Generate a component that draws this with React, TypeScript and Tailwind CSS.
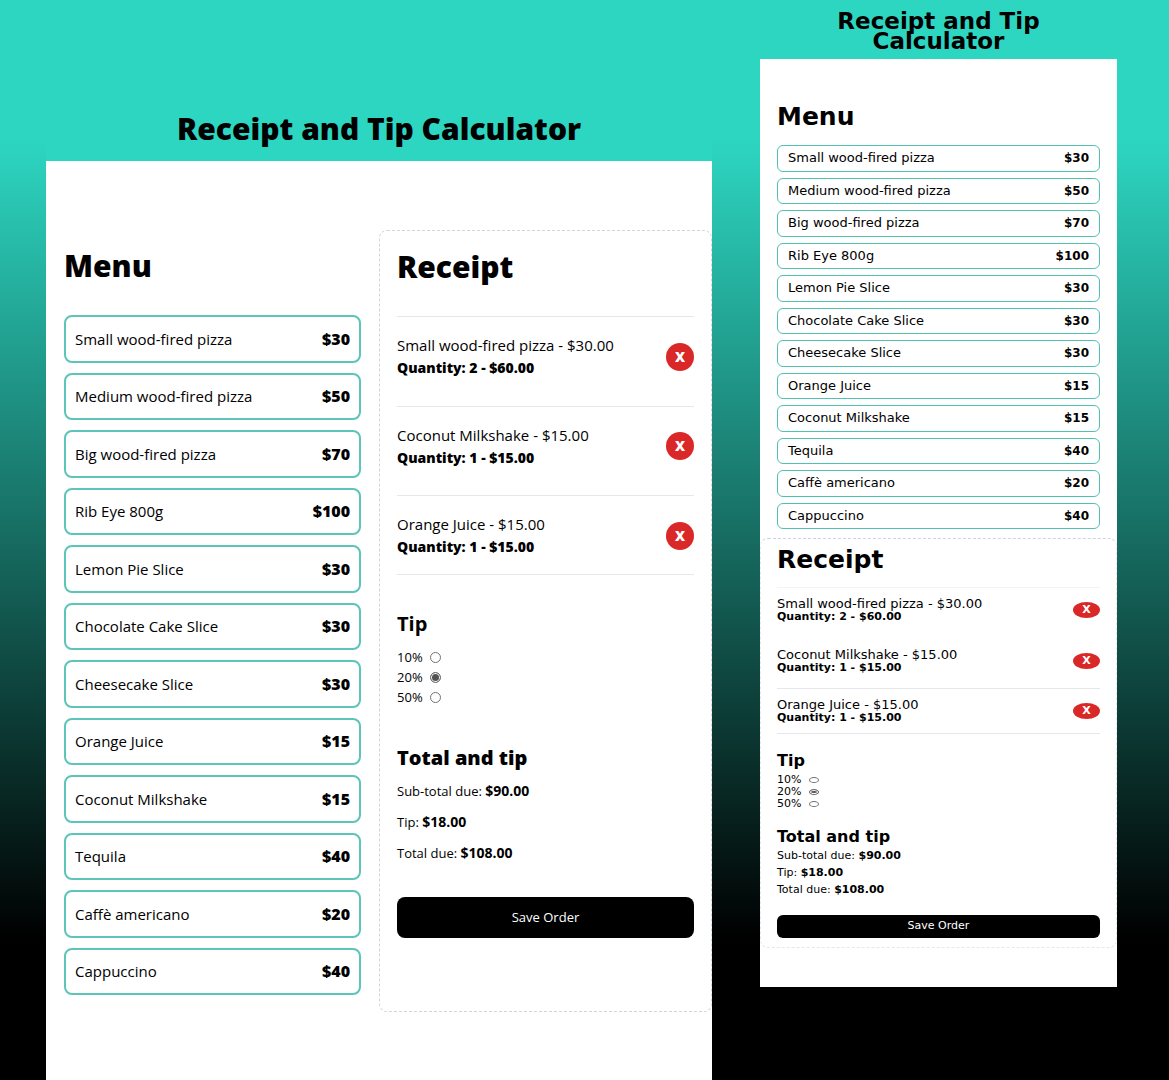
import { useState } from "react";

type Dish = { name: string; price: number };
type Line = { name: string; price: number; quantity: number };

const DISHES: Dish[] = [
  { name: "Small wood-fired pizza", price: 30 },
  { name: "Medium wood-fired pizza", price: 50 },
  { name: "Big wood-fired pizza", price: 70 },
  { name: "Rib Eye 800g", price: 100 },
  { name: "Lemon Pie Slice", price: 30 },
  { name: "Chocolate Cake Slice", price: 30 },
  { name: "Cheesecake Slice", price: 30 },
  { name: "Orange Juice", price: 15 },
  { name: "Coconut Milkshake", price: 15 },
  { name: "Tequila", price: 40 },
  { name: "Caffè americano", price: 20 },
  { name: "Cappuccino", price: 40 },
];

const ORDER: Line[] = [
  { name: "Small wood-fired pizza", price: 30, quantity: 2 },
  { name: "Coconut Milkshake", price: 15, quantity: 1 },
  { name: "Orange Juice", price: 15, quantity: 1 },
];

const TIPS = [10, 20, 50];

const money = (n: number) => `$${n.toFixed(2)}`;

function useOrder() {
  const [lines, setLines] = useState(ORDER);
  const [tip, setTip] = useState(20);
  const add = (dish: Dish) =>
    setLines((old) =>
      old.some((l) => l.name === dish.name)
        ? old.map((l) => (l.name === dish.name ? { ...l, quantity: l.quantity + 1 } : l))
        : [...old, { ...dish, quantity: 1 }],
    );
  const remove = (name: string) => setLines((old) => old.filter((l) => l.name !== name));
  const subtotal = lines.reduce((sum, l) => sum + l.price * l.quantity, 0);
  const tipAmount = (subtotal * tip) / 100;
  return { lines, tip, setTip, add, remove, subtotal, tipAmount };
}

function DesktopView() {
  const order = useOrder();
  return (
    <section className="flex min-w-0 flex-col font-['Open_Sans','Noto_Sans',sans-serif]">
      <header className="bg-[#2dd6c1] pt-[109px] pb-3">
        <h1 className="text-center text-[30px] leading-10 font-extrabold">Receipt and Tip Calculator</h1>
      </header>
      <div className="grid flex-1 grid-cols-2 items-start bg-white pt-[69px]">
        <div className="px-[18px] pt-4">
          <h2 className="text-[30px] leading-10 font-extrabold">Menu</h2>
          <div className="mt-[29px] grid min-h-[680px] auto-rows-fr gap-2.5">
            {DISHES.map((d) => (
              <button
                key={d.name}
                onClick={() => order.add(d)}
                className="flex items-center justify-between rounded-lg border-2 border-[#5cc4b8] px-[9px] text-left"
              >
                <span className="text-[15px]">{d.name}</span>
                <span className="text-base font-extrabold">${d.price}</span>
              </button>
            ))}
          </div>
        </div>
        <div className="min-h-[782px] rounded-lg border border-dashed border-gray-300 px-[17px] pt-4">
          <h2 className="text-[30px] leading-10 font-extrabold">Receipt</h2>
          <ul className="mt-[29px] flex min-h-[259px] flex-col justify-between">
            {order.lines.map((l) => (
              <li
                key={l.name}
                className="flex items-center justify-between border-t border-gray-200 pt-[17px] pb-4 last:border-b"
              >
                <div>
                  <p className="text-[15px] leading-[23px]">
                    {l.name} - {money(l.price)}
                  </p>
                  <p className="text-sm leading-[22px] font-extrabold">
                    Quantity: {l.quantity} - {money(l.price * l.quantity)}
                  </p>
                </div>
                <button
                  onClick={() => order.remove(l.name)}
                  aria-label={`Remove ${l.name}`}
                  className="size-7 rounded-full bg-[#d92827] text-sm leading-7 font-extrabold text-white"
                >
                  X
                </button>
              </li>
            ))}
          </ul>
          <h3 className="mt-[35px] text-[20px] leading-7 font-bold">Tip</h3>
          <div className="mt-[9px] flex flex-col">
            {TIPS.map((t) => (
              <label key={t} className="flex items-center gap-[5px] text-[13px] leading-5">
                <span className="w-7">{t}%</span>
                <input
                  type="radio"
                  name="tip-desktop"
                  checked={order.tip === t}
                  onChange={() => order.setTip(t)}
                  className="size-[11px] appearance-none rounded-full border border-neutral-500 bg-white checked:bg-neutral-600 checked:shadow-[inset_0_0_0_1px_white]"
                />
              </label>
            ))}
          </div>
          <h3 className="mt-[37px] text-[20px] leading-7 font-extrabold">Total and tip</h3>
          <div className="mt-[9px] flex flex-col gap-[11px] text-[13px] leading-5">
            <p>
              Sub-total due: <span className="text-sm leading-5 font-bold">{money(order.subtotal)}</span>
            </p>
            <p>
              Tip: <span className="text-sm leading-5 font-bold">{money(order.tipAmount)}</span>
            </p>
            <p>
              Total due:{" "}
              <span className="text-sm leading-5 font-bold">{money(order.subtotal + order.tipAmount)}</span>
            </p>
          </div>
          <button className="mt-[34px] h-[41px] w-full rounded-lg bg-black text-[13px] text-white">Save Order</button>
        </div>
      </div>
    </section>
  );
}

function MobileView() {
  const order = useOrder();
  return (
    <section className="flex min-w-0 flex-col font-['DejaVu_Sans',sans-serif]">
      <header className="pt-[11px] pb-2">
        <h1 className="mx-auto max-w-64 text-center text-[23px] leading-5 font-bold">
          Receipt and Tip Calculator
        </h1>
      </header>
      <div className="bg-white pt-[48px] pb-[39px]">
        <div className="px-[17px]">
          <h2 className="text-[25px] leading-5 font-bold">Menu</h2>
          <div className="mt-[18px] grid min-h-[384px] auto-rows-fr gap-1.5">
            {DISHES.map((d) => (
              <button
                key={d.name}
                onClick={() => order.add(d)}
                className="flex items-center justify-between rounded-md border border-[#4fc0b2] px-2.5 text-left"
              >
                <span className="text-[13px] leading-4">{d.name}</span>
                <span className="text-[12px] leading-4 font-bold">${d.price}</span>
              </button>
            ))}
          </div>
        </div>
        <div className="mt-[9px] rounded-lg border border-dashed border-gray-200 border-t-slate-300 px-4 pt-[11px] pb-[9px]">
          <h2 className="text-[25px] leading-5 font-bold">Receipt</h2>
          <ul className="mt-[17px] flex min-h-[147px] flex-col justify-between">
            {order.lines.map((l) => (
              <li
                key={l.name}
                className="flex items-center justify-between border-t border-gray-200 pt-[9px] pb-[9px] first:border-gray-100 last:border-b even:border-transparent"
              >
                <div>
                  <p className="text-[13px] leading-[14px]">
                    {l.name} - {money(l.price)}
                  </p>
                  <p className="text-[11px] leading-3 font-bold">
                    Quantity: {l.quantity} - {money(l.price * l.quantity)}
                  </p>
                </div>
                <button
                  onClick={() => order.remove(l.name)}
                  aria-label={`Remove ${l.name}`}
                  className="h-4 w-[27px] rounded-[50%] bg-[#d92827] text-[11px] leading-4 font-bold text-white"
                >
                  X
                </button>
              </li>
            ))}
          </ul>
          <h3 className="mt-[19px] text-[16px] leading-4 font-bold">Tip</h3>
          <div className="mt-[5px] flex flex-col">
            {TIPS.map((t) => (
              <label key={t} className="flex items-center gap-1.5 text-[11px] leading-3">
                <span className="w-[26px]">{t}%</span>
                <input
                  type="radio"
                  name="tip-mobile"
                  checked={order.tip === t}
                  onChange={() => order.setTip(t)}
                  className="h-1.5 w-2.5 appearance-none rounded-[50%] border border-neutral-500 bg-white checked:bg-neutral-600 checked:shadow-[inset_0_0_0_1px_white]"
                />
              </label>
            ))}
          </div>
          <h3 className="mt-[19px] text-[16px] leading-4 font-bold">Total and tip</h3>
          <div className="mt-[5px] flex flex-col gap-[5px] text-[11px] leading-3">
            <p>
              Sub-total due: <span className="font-bold">{money(order.subtotal)}</span>
            </p>
            <p>
              Tip: <span className="font-bold">{money(order.tipAmount)}</span>
            </p>
            <p>
              Total due: <span className="font-bold">{money(order.subtotal + order.tipAmount)}</span>
            </p>
          </div>
          <button className="mt-[19px] h-[23px] w-full rounded-md bg-black text-[11px] text-white">Save Order</button>
        </div>
      </div>
    </section>
  );
}

export default function App() {
  return (
    <main className="grid min-h-screen grid-cols-[666fr_357fr] gap-12 bg-linear-to-b/srgb from-[#2dd6c1] from-13% to-black to-87% pr-[52px] pl-[46px] text-black">
      <DesktopView />
      <MobileView />
    </main>
  );
}
